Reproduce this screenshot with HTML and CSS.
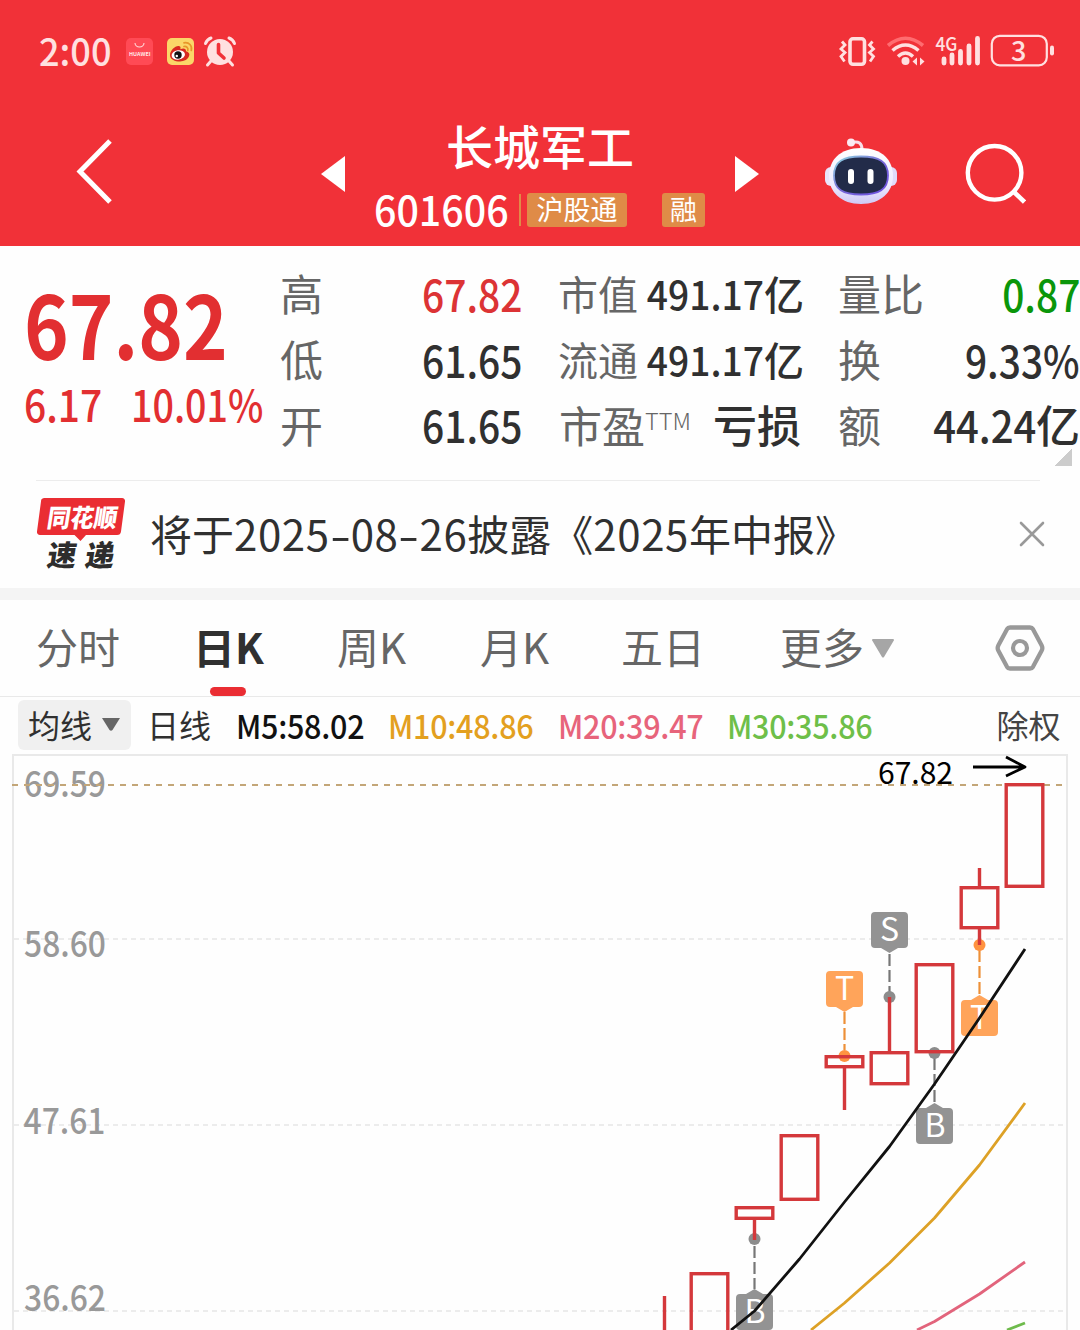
FILE: index.html
```
<!DOCTYPE html>
<html lang="zh-CN">
<head>
<meta charset="utf-8">
<title>长城军工 601606</title>
<link rel="stylesheet" href="styles.css">
</head>
<body>
<header class="top">
  <div class="status">
    <div class="status-left">
      <span class="clock">2:00</span>
      <svg class="app" width="27" height="27" viewBox="0 0 27 27">
        <rect width="27" height="27" rx="5" fill="#ff4a55"/>
        <path d="M9 5a4.500 4 0 0 0 9 0" fill="none" stroke="#ffd9d9" stroke-width="1.100"/>
        <text x="3" y="17.500" textLength="21.500" lengthAdjust="spacingAndGlyphs" font-size="5.400" font-weight="700" fill="#ffe6e6">HUAWEI</text>
      </svg>
      <svg class="app" width="27" height="27" viewBox="0 0 27 27">
        <rect width="27" height="27" rx="5" fill="#fbd768"/>
        <path d="M3 17C3 12 9 7 12.500 8.200c1.500.6 1 2.300.8 3 3-1.200 6-1 5.700 2 3 1 4 2.500 3 5-2 5-8 5.300-11 5.200C6 23 3 20.500 3 17z" fill="#d92a20"/>
        <ellipse cx="11.300" cy="17" rx="6.700" ry="4.700" fill="#fff" transform="rotate(-8 11 17)"/>
        <circle cx="11" cy="17" r="3.700" fill="#111"/>
        <circle cx="9.800" cy="18" r="1.200" fill="#fff"/>
        <path d="M17 8.500c2.500-.5 4.500 1.500 3.800 4M17 4.800c5-1 8.500 3 7.300 7.700" fill="none" stroke="#e8962a" stroke-width="1.700" stroke-linecap="round"/>
      </svg>
      <svg class="alarm" width="34" height="32" viewBox="0 0 34 32">
        <circle cx="17" cy="16" r="13" fill="#ffe0e0"/>
        <path d="M2.500 7.500Q4 3.500 8 2M31.500 7.500Q30 3.500 26 2M8 25l-3.500 4M26 25l3.500 4" fill="none" stroke="#ffe0e0" stroke-width="3" stroke-linecap="round"/>
        <path d="M15.500 8.500V17l5.500 5" fill="none" stroke="#f13138" stroke-width="3.600" stroke-linecap="round" stroke-linejoin="round"/>
      </svg>
    </div>
    <svg class="status-right" width="220" height="48" viewBox="836 24 220 48">
      <g fill="none" stroke="#ffe0e0">
        <rect x="850" y="38.800" width="14.500" height="25.500" rx="3" stroke-width="3.600"/>
        <path d="M842 41.500l3 3.500-4 4 4 3.500-4 4 3.500 5M872.500 41.500l-3 3.500 4 4-4 3.500 4 4-3.500 5" stroke-width="2.800"/>
        <path d="M888 45.500Q905.500 31 923 45.500" stroke="#ff6c70" stroke-width="3.600"/>
        <path d="M892.500 50.500Q905.500 39.500 918.500 50.500" stroke-width="3.600"/>
        <path d="M898 56.500Q905.500 49.500 913 56.500" stroke-width="3.400"/>
        <path d="M944 59v4M952 55v8M960.500 51.500V63M969 46v17M977.500 38.500V63" stroke-width="4.800" stroke-linecap="round"/>
        <rect x="991.800" y="35.800" width="55" height="29.500" rx="8" stroke-width="2.200"/>
      </g>
      <g fill="#ffe0e0">
        <circle cx="905.500" cy="61" r="4"/>
        <path d="M912.500 61.500l4.500-4v8zM924.500 61.500l-4.500-4v8z"/>
        <rect x="1050" y="45.500" width="4" height="10" rx="2"/>
        <text x="935.500" y="50.500" font-size="19" font-weight="500" textLength="22" lengthAdjust="spacingAndGlyphs">4G</text>
        <text x="1011" y="60.500" font-size="27" font-weight="500">3</text>
      </g>
    </svg>
  </div>
  <div class="titlebar">
    <svg class="back" width="40" height="68" viewBox="0 0 40 68"><path d="M35 4L5 34.500 35 65" fill="none" stroke="#fff" stroke-width="5"/></svg>
    <svg class="prev" width="24" height="36" viewBox="0 0 24 36"><path d="M24 0v36L0 18z" fill="#fff"/></svg>
    <div class="stock">
      <div class="name">长城军工</div>
      <div class="code-row">
        <span class="code">601606</span>
        <i class="bar"></i>
        <span class="tag">沪股通</span>
        <span class="tag tag-rong">融</span>
      </div>
    </div>
    <svg class="next" width="24" height="36" viewBox="0 0 24 36"><path d="M0 0v36l24-18z" fill="#fff"/></svg>
    <svg class="robot" width="74" height="68" viewBox="824 137 74 68">
      <defs>
        <linearGradient id="shell" x1="0" y1="0" x2="0" y2="1"><stop offset="0" stop-color="#fff"/><stop offset=".65" stop-color="#eeebff"/><stop offset="1" stop-color="#cfc9f5"/></linearGradient>
        <linearGradient id="rim" x1="0" y1="0" x2="1" y2="1"><stop offset="0" stop-color="#8fd9df"/><stop offset=".5" stop-color="#7668d8"/><stop offset="1" stop-color="#6d4fe0"/></linearGradient>
      </defs>
      <path d="M852 142.500q10-2.500 10 7" fill="none" stroke="#f8dfe9" stroke-width="3"/>
      <circle cx="851" cy="142.500" r="4" fill="#fbeaf2"/>
      <rect x="825" y="167" width="14" height="19" rx="6" fill="#e9e4fb"/>
      <rect x="883" y="167" width="14" height="19" rx="6" fill="#e0dbfa"/>
      <path d="M861 148c21 0 32 12 32 28s-12 28-32 28-32-12-32-28 11-28 32-28z" fill="url(#shell)"/>
      <path d="M861 156.500c18 0 27 5 27 19s-9 19-27 19-27-5-27-19 9-19 27-19z" fill="#222b49" stroke="url(#rim)" stroke-width="1.800"/>
      <rect x="848" y="169" width="6" height="15" rx="3" fill="#fff"/>
      <rect x="867.500" y="169" width="6" height="15" rx="3" fill="#fff"/>
    </svg>
    <svg class="search" width="62" height="62" viewBox="964 142 62 62"><circle cx="994.600" cy="172.800" r="26.800" fill="none" stroke="#fff" stroke-width="4.400"/><path d="M1013.500 191.500l11 10.500" stroke="#fff" stroke-width="4.600"/></svg>
  </div>
</header>

<section class="quote">
  <div class="price">
    <div class="last"><span class="din">67.82</span></div>
    <div class="change"><span class="din">6.17</span><span class="din pct">10.01%</span></div>
  </div>
  <dl class="stats">
    <div><dt>高</dt><dd class="red"><span class="din r">67.82</span></dd></div>
    <div><dt class="sm">市值</dt><dd class="sm cap"><span class="din r">491.17</span>亿</dd></div>
    <div><dt>量比</dt><dd class="green"><span class="din r">0.87</span></dd></div>
    <div><dt>低</dt><dd><span class="din r">61.65</span></dd></div>
    <div><dt class="sm">流通</dt><dd class="sm cap"><span class="din r">491.17</span>亿</dd></div>
    <div><dt>换</dt><dd><span class="din r">9.33%</span></dd></div>
    <div><dt>开</dt><dd><span class="din r">61.65</span></dd></div>
    <div><dt>市盈<span class="ttm">TTM</span></dt><dd>亏损</dd></div>
    <div><dt>额</dt><dd><span class="din r wide">44.24</span>亿</dd></div>
  </dl>
  <i class="corner"></i>
</section>

<section class="news">
  <svg class="brand" width="92" height="88" viewBox="35 491 92 88">
    <path d="M44 498h78a3 3 0 0 1 3 3.500l-4 30a4 4 0 0 1-4 3.500H86l-5.500 6-6-6H40a3 3 0 0 1-3-3.500l4-30a3.500 3.500 0 0 1 3-3.500z" fill="#ea2d33"/>
    <g font-weight="900">
      <text transform="translate(46 526.500) skewX(-9)" font-size="25" textLength="70" lengthAdjust="spacingAndGlyphs" fill="#fff">同花顺</text>
      <text transform="translate(46 566) skewX(-9)" font-size="29" textLength="67" fill="#2d2d2d">速递</text>
    </g>
  </svg>
  <p>将于<span>2025</span><b>-</b><span>08</span><b>-</b><span>26</span>披露《<span>2025</span>年中报》</p>
  <svg class="close" width="26" height="26" viewBox="0 0 26 26"><path d="M2 2l22 22M24 2L2 24" stroke="#999" stroke-width="2.600" stroke-linecap="round"/></svg>
</section>

<nav class="tabs">
  <a>分时</a>
  <a class="active">日K</a>
  <a>周K</a>
  <a>月K</a>
  <a>五日</a>
  <a>更多</a>
  <svg class="more" width="22" height="19" viewBox="0 0 22 19"><path d="M1 0h20a1 1 0 0 1 .8 1.600L12 18q-1 1.200-2 0L.2 1.600A1 1 0 0 1 1 0z" fill="#a6a6a6"/></svg>
  <svg class="gear" width="50" height="48" viewBox="995 624 50 48">
    <path d="M1010 627.500h20q2 0 3 1.700l8.600 16q1.500 2.800 0 5.600l-8.600 16q-1 1.700-3 1.700h-20q-2 0-3-1.700l-8.600-16q-1.500-2.800 0-5.600l8.600-16q1-1.700 3-1.700z" fill="none" stroke="#999" stroke-width="4.300"/>
    <circle cx="1020" cy="648" r="7" fill="none" stroke="#999" stroke-width="4.200"/>
  </svg>
</nav>

<div class="legend">
  <div class="picker">均线<svg width="18" height="13" viewBox="0 0 18 13"><path d="M0 0h18l-7.500 12q-1.500 1.500-3 0z" fill="#666"/></svg></div>
  <span class="period">日线</span>
  <span class="ma ma5">M5:58.02</span>
  <span class="ma ma10">M10:48.86</span>
  <span class="ma ma20">M20:39.47</span>
  <span class="ma ma30">M30:35.86</span>
  <span class="exright">除权</span>
</div>

<svg class="chart" width="1080" height="577" viewBox="0 753 1080 577">
  <path d="M13 1330V755H1067V1330" fill="none" stroke="#e9e9e9" stroke-width="2"/>
  <path d="M14 939H1066M14 1125H1066M14 1311H1066" stroke="#e6e6e6" stroke-width="1.500" stroke-dasharray="5 4"/>
  <g class="axis">
    <text x="24" y="797" textLength="82" lengthAdjust="spacingAndGlyphs">69.59</text>
    <text x="24" y="957" textLength="82" lengthAdjust="spacingAndGlyphs">58.60</text>
    <text x="23.500" y="1134" textLength="82" lengthAdjust="spacingAndGlyphs">47.61</text>
    <text x="24" y="1311" textLength="82" lengthAdjust="spacingAndGlyphs">36.62</text>
  </g>
  <path d="M12 785H1063" stroke="#c3a678" stroke-width="2" stroke-dasharray="6 6"/>

  <g fill="none" stroke-width="2.200">
    <path d="M844.500 1012V1050M979.500 950V995" stroke="#ed9038" stroke-dasharray="12 4"/>
    <path d="M889.500 954V992M934.500 1058V1103M754.500 1246V1289" stroke="#777" stroke-dasharray="12 4"/>
  </g>
  <g fill="#ff9340"><circle cx="844.500" cy="1056" r="6"/><circle cx="979.500" cy="945" r="6"/></g>
  <g fill="#8c8c8c"><circle cx="889.500" cy="997" r="6"/><circle cx="934.500" cy="1053" r="6"/><circle cx="754.500" cy="1239" r="6"/></g>

  <g fill="none" stroke="#d4383b" stroke-width="3.400">
    <rect x="1006.200" y="784.700" width="36.600" height="101.600"/>
    <rect x="961.200" y="887.700" width="36.600" height="40"/>
    <rect x="916.200" y="964.700" width="36.600" height="87"/>
    <rect x="871.200" y="1052.700" width="36.600" height="31"/>
    <rect x="826.200" y="1056.700" width="36.600" height="10"/>
    <rect x="781.200" y="1135.700" width="36.600" height="63.600"/>
    <rect x="736.200" y="1207.700" width="36.600" height="10.600"/>
    <rect x="691.200" y="1273.700" width="36.600" height="70"/>
    <path d="M979.500 868V886M979.500 929V945M889.500 997V1051M844.500 1068V1110M754.500 1220V1240M664.500 1296V1330"/>
  </g>
  <g fill="#909090" fill-opacity=".97">
    <path d="M875 912h29a4 4 0 0 1 4 4v28a4 4 0 0 1-4 4h-6l-8.500 5-8.500-5h-6a4 4 0 0 1-4-4v-28a4 4 0 0 1 4-4z"/>
    <path d="M920 1108h6l8.500-5 8.500 5h6a4 4 0 0 1 4 4v28a4 4 0 0 1-4 4h-29a4 4 0 0 1-4-4v-28a4 4 0 0 1 4-4z"/>
    <path d="M740 1294h6l8.500-5 8.500 5h6a4 4 0 0 1 4 4v28a4 4 0 0 1-4 4h-29a4 4 0 0 1-4-4v-28a4 4 0 0 1 4-4z"/>
  </g>
  <g fill="#ffa45a">
    <path d="M830 971h29a4 4 0 0 1 4 4v28a4 4 0 0 1-4 4h-6l-8.500 5-8.500-5h-6a4 4 0 0 1-4-4v-28a4 4 0 0 1 4-4z"/>
    <path d="M965 1000h6l8.500-5 8.500 5h6a4 4 0 0 1 4 4v28a4 4 0 0 1-4 4h-29a4 4 0 0 1-4-4v-28a4 4 0 0 1 4-4z"/>
  </g>
  <g class="flag">
    <text x="889.500" y="941">S</text>
    <text x="844.500" y="1000">T</text>
    <text x="979.500" y="1029">T</text>
    <text x="935" y="1137">B</text>
    <text x="755" y="1323">B</text>
  </g>
  <g fill="none" stroke-width="2.800" stroke-linejoin="round">
    <path d="M731 1330L754.500 1311 799.500 1259 844.500 1202 889.500 1146.500 934.500 1084 979.500 1018 1025 949" stroke="#111"/>
    <path d="M811 1330L844.500 1303 889.500 1263 934.500 1218 979.500 1165 1025 1103" stroke="#dda126"/>
    <path d="M917 1330L934.500 1321.500 979.500 1294 1025 1262" stroke="#e2647c"/>
    <path d="M1007 1330L1025 1323" stroke="#6ebb4c"/>
    <path d="M973 767H1025M1006 757L1025 767 1006 776" stroke="#000"/>
  </g>
  <text x="878" y="784" font-size="30.500" textLength="75" lengthAdjust="spacingAndGlyphs">67.82</text>
</svg>
</body>
</html>
```
FILE: styles.css
```
* { box-sizing: border-box; }
body {
  margin: 0;
  width: 1080px;
  height: 1330px;
  overflow: hidden;
  background: #fefefe;
  color: #303030;
  font-family: "Noto Sans CJK SC", sans-serif;
  line-height: 1;
}
svg { display: block; flex: none; }
p, dl, dd { margin: 0; }

.top { height: 246px; background: #f13138; color: #fff; }
.status { display: flex; justify-content: space-between; height: 103px; padding: 0 24px 0 39px; }
.status-left { display: flex; align-items: center; color: #ffe0e0; }
.clock { width: 87px; font-size: 38px; font-weight: 500; white-space: nowrap; padding-bottom: 4px; transform: scaleX(.95); transform-origin: left; }
.app { margin-right: 14px; }
.alarm { margin-left: -5px; }
.status-right { margin-top: 24px; }

.titlebar { display: flex; height: 143px; padding-left: 75px; }
.back { margin-top: 34px; }
.prev { margin: 53px 0 0 206px; }
.stock { width: 334px; margin: 18px 28px 0; padding-left: 1px; }
.name { width: 334px; padding-right: 2px; font-size: 47px; font-weight: 500; text-align: center; }
.code-row { display: flex; align-items: center; height: 34px; margin-top: 25px; }
.code { width: 145px; flex: none; padding-bottom: 4px; font-size: 41px; font-weight: 500; transform: scaleX(.96); transform-origin: left; }
.bar { width: 2px; height: 32px; background: #e08a48; margin-right: 6px; }
.tag { height: 34px; width: 100px; flex: none; border-radius: 3px; background: #df8b47; font-size: 27px; line-height: 31px; text-align: center; }
.tag-rong { width: 43px; margin-left: 35px; }
.next { margin-top: 53px; }
.robot { margin: 34px 0 0 65px; }
.search { margin: 39px 0 0 66px; }

.quote { position: relative; display: flex; height: 234px; padding: 14px 1px 0 24px; }
.price { width: 256px; color: #e22f31; }
.last { margin-top: 18px; font-size: 88px; font-weight: 700; }
.last .din { transform: scaleX(.862); }
.change { display: flex; margin-top: 15px; font-size: 44px; font-weight: 500; }
.din { display: inline-block; transform: scaleX(.885); transform-origin: left; }
.din.r { transform-origin: right; }
.din.r.wide { transform: scaleX(.91); }
.din.pct { transform: scaleX(.855); margin-left: 19px; }
.stats { display: grid; grid-template-columns: 242px 242px 242px; column-gap: 37px; grid-auto-rows: 65.700px; width: 799px; }
.stats > div { display: flex; align-items: center; justify-content: space-between; white-space: nowrap; }
dt { color: #666; font-size: 43px; }
dt.sm { margin-left: -1px; font-size: 40px; }
dd { font-size: 44px; font-weight: 500; }
dd.sm { font-size: 40px; }
dd.cap { padding-right: 3px; }
.cap .din.r { transform: scaleX(.93); }
dd.red { color: #dc3335; }
dd.green { color: #0a960a; }
.ttm { font-size: 23.500px; font-weight: 300; vertical-align: 13px; }
.corner { position: absolute; right: 8px; bottom: 14px; width: 17px; height: 17px; background: linear-gradient(135deg, transparent 50%, #ccc 50%); }

.news { display: flex; height: 120px; padding-left: 35px; border-bottom: 12px solid #f4f4f4; background: linear-gradient(#ececec, #ececec) 36px 0 / 1004px 1px no-repeat; }
.brand { margin-top: 11px; }
.news p { width: 868px; margin: 32px 0 0 23px; font-size: 42px; white-space: nowrap; }
.news p span { letter-spacing: .6px; }
.news b { display: inline-block; width: 21px; font-weight: 400; text-align: center; transform: scaleX(1.450); }
.close { margin: 41px 0 0 1px; }

.tabs { display: flex; height: 97px; padding-left: 36px; border-bottom: 1px solid #e9e9e9; font-size: 42px; color: #666; }
.tabs a { position: relative; width: 143px; padding-top: 25px; white-space: nowrap; }
.tabs a:nth-child(1) { width: 157px; }
.tabs a:nth-child(2) { width: 144px; }
.tabs a:nth-child(4) { width: 141px; }
.tabs a:nth-child(5) { width: 159px; }
.tabs a:nth-child(6) { width: 93px; }
.tabs .active { color: #303030; font-weight: 700; }
.tabs .active::after { content: ""; position: absolute; left: 17px; bottom: 0; width: 36px; height: 9px; border-radius: 4.500px; background: #ea2d33; }
.more { margin-top: 39px; margin-left: -1px; }
.gear { margin: 24px 0 0 101px; }

.legend { display: flex; height: 56px; padding: 3px 0 0 18px; font-size: 32px; }
.picker { display: flex; align-items: center; gap: 10px; width: 113px; height: 50px; padding: 0 0 2px 10px; border-radius: 6px; background: #f0f0f0; }
.period { margin: 8px 0 0 16px; width: 89px; }
.ma { width: 169.500px; padding-top: 9px; font-size: 33px; font-weight: 500; letter-spacing: -.3px; white-space: nowrap; transform: scaleX(.925); transform-origin: left; }
.ma5 { width: 152px; color: #111; }
.ma10 { color: #e3a01f; }
.ma20 { color: #e7647b; }
.ma30 { color: #6ebf49; }
.exright { margin: 8px 0 0 100px; color: #444; }

.chart { font-family: "Noto Sans CJK SC", sans-serif; }
.axis { font-size: 35.500px; font-weight: 500; fill: #999; }
.flag { font-size: 32px; fill: #fff; text-anchor: middle; }
```
